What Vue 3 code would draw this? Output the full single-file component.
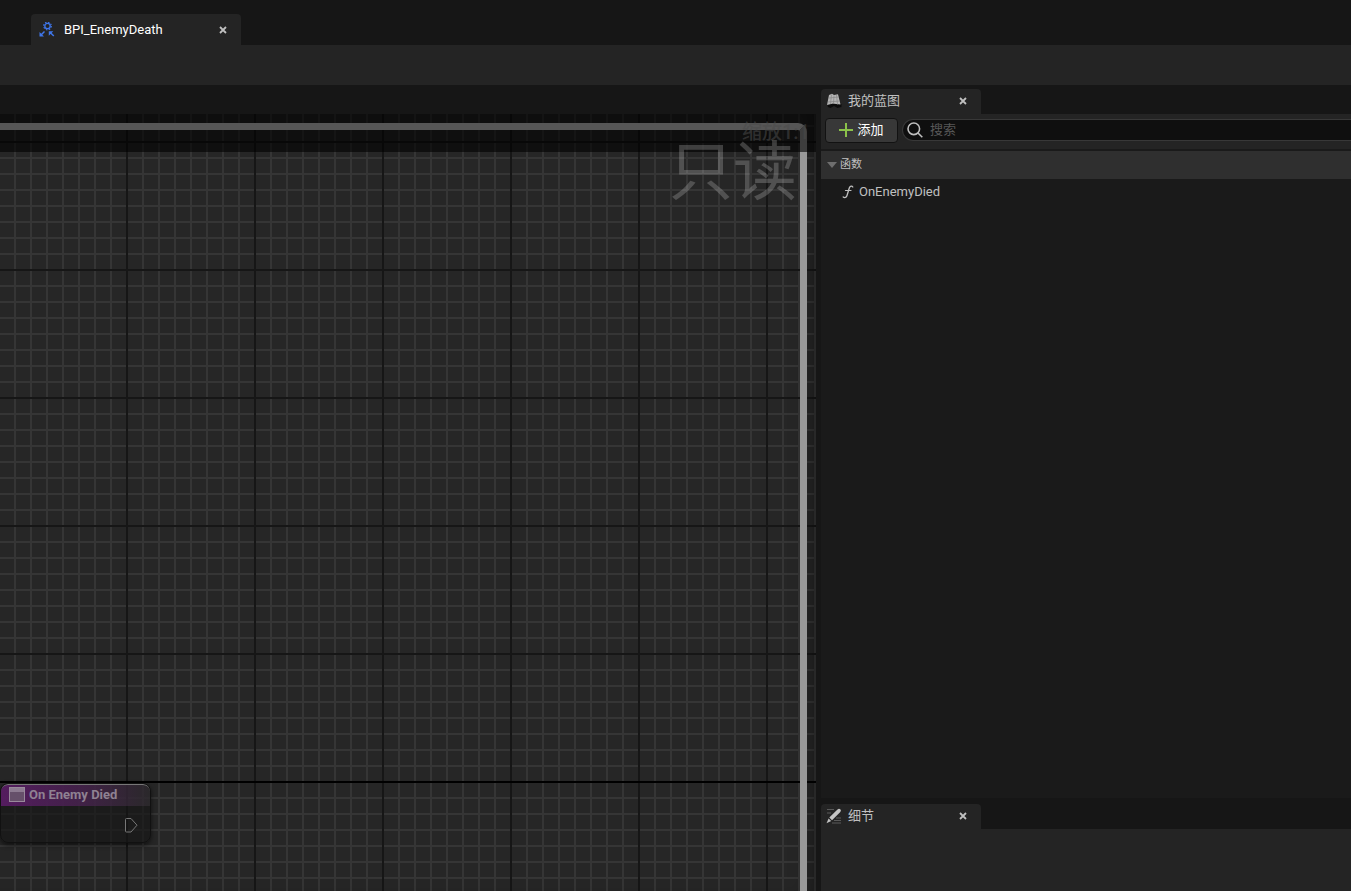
<template>
  <div class="editor">
    <header class="title-bar">
      <div class="asset-tab">
        <svg class="asset-icon" width="16" height="16" viewBox="0 0 16 16" fill="none" stroke="#3f76ea">
          <circle cx="8.5" cy="4" r="2.7" stroke-width="1.3" />
          <circle cx="8.5" cy="4" r="3.8" stroke-width="1.2" stroke-dasharray="1.5 1.484" />
          <path d="M5.500 9.500L1.500 13.500M14.800 14L11 10.200" stroke-width="1.5" />
          <path d="M.5 10v4.500H5zM9.800 9.200h4.500l-4.500 4.500z" fill="#3f76ea" stroke="none" />
        </svg>
        <span class="asset-name">BPI_EnemyDeath</span>
        <button class="close" aria-label="Close">
          <svg width="8" height="8" viewBox="0 0 8 8"><path d="M1 1l6 6M7 1l-6 6" stroke="currentColor" stroke-width="1.8" /></svg>
        </button>
      </div>
    </header>
    <div class="toolbar"></div>

    <div class="workspace">
      <main class="graph-column">
        <div class="graph">
          <div class="frame"></div>
          <div class="graph-header"></div>
          <div class="zoom-label">缩放1:1</div>
          <div class="watermark">只读</div>
          <div class="node">
            <div class="node-title">
              <svg width="16" height="15" viewBox="0 0 16 15">
                <rect x="0.5" y="0.5" width="15" height="14" fill="#66506a" stroke="#98899b" />
                <rect x="1" y="1" width="14" height="4" fill="#8d7b91" />
              </svg>
              <span>{{ node.title }}</span>
            </div>
            <div class="node-pins">
              <svg width="13" height="15" viewBox="0 0 13 15" fill="none" stroke="#777">
                <path d="M1.5 .5h4.500l6 6.700-6 6.800h-4.500q-1 0-1-1v-11.500q0-1 1-1z" />
              </svg>
            </div>
          </div>
        </div>
      </main>

      <aside class="side">
        <section class="blueprint">
          <div class="panel-tab">
            <svg width="16" height="16" viewBox="0 0 16 16">
              <path d="M1 11l1 3 2.500 1 3.500-2 3.500 2 4-1v-3z" fill="#0c0c0c" />
              <path d="M3 2l3-1.200 2 1.300 4-.8L14.500 11.500l-4.500-.5-3-.5L1 12z" fill="#b4b4b4" />
              <path d="M5.500 1.500L4.500 11M8 2.500L7.500 10.500M10.500 2l1 9.500M3 5l9.500-1M2 9l11.500-1" fill="none" stroke="#858585" stroke-width=".7" />
            </svg>
            <h2>我的蓝图</h2>
            <button class="close" aria-label="Close">
              <svg width="8" height="8" viewBox="0 0 8 8"><path d="M1 1l6 6M7 1l-6 6" stroke="currentColor" stroke-width="1.8" /></svg>
            </button>
          </div>
          <div class="panel-tools">
            <button class="btn-add">
              <svg width="14" height="14" viewBox="0 0 14 14"><path d="M7 0v14M0 7h14" stroke="#8bc24a" stroke-width="2" /></svg>
              <span>添加</span>
            </button>
            <label class="search">
              <svg width="16" height="16" viewBox="0 0 16 16" fill="none" stroke="#c0c0c0" stroke-width="1.6">
                <circle cx="6.800" cy="6.800" r="5.800" />
                <path d="M11 11l4.300 4.300" />
              </svg>
              <input v-model="query" type="text" placeholder="搜索" aria-label="搜索" />
            </label>
          </div>
          <button class="category" :aria-expanded="open" @click="open = !open">
            <svg width="10" height="6" viewBox="0 0 10 6"><path d="M0 0h10L5 6z" fill="#6e6e6e" /></svg>
            <span>函数</span>
          </button>
          <ul v-if="open" class="functions">
            <li v-for="fn in filteredFunctions" :key="fn">
              <svg width="12" height="14" viewBox="0 0 12 14" fill="none" stroke="#c0c0c0" stroke-linecap="round">
                <path d="M10.800 2C10 .6 8 .6 7.300 3L5 10.500C4.500 12.600 2.500 13 1.200 12" stroke-width="1.300" />
                <path d="M3.500 5.500h5.500" stroke-width="1.200" />
              </svg>
              <span>{{ fn }}</span>
            </li>
          </ul>
        </section>

        <section class="details">
          <div class="panel-tab">
            <svg width="16" height="16" viewBox="0 0 16 16">
              <path d="M1 1.500h7M1 5h4M10 10h5M8 12.500h7M6 15h9" stroke="#5a5a5a" stroke-width="1.200" />
              <path d="M11.500 1.500q1.500-1.500 2.800-.2 1.300 1.200 0 2.700L6 12.300 3.300 9.600z" fill="#c4c4c4" />
              <path d="M2.600 10.500l2.600 2.600L.5 15.200z" fill="#c4c4c4" />
            </svg>
            <h2>细节</h2>
            <button class="close" aria-label="Close">
              <svg width="8" height="8" viewBox="0 0 8 8"><path d="M1 1l6 6M7 1l-6 6" stroke="currentColor" stroke-width="1.8" /></svg>
            </button>
          </div>
          <div class="details-body"></div>
        </section>
      </aside>
    </div>
  </div>
</template>

<script setup>
import { ref, computed } from 'vue'

const query = ref('')
const open = ref(true)
const node = ref({ title: 'On Enemy Died' })
const functions = ref(['OnEnemyDied'])

const filteredFunctions = computed(() => {
  return functions.value.filter(fn => fn.toLowerCase().includes(query.value.toLowerCase()))
})
</script>

<style>
body {
  margin: 0;
  background: #161616;
}
</style>

<style scoped>
* {
  box-sizing: border-box;
}

svg {
  display: block;
  flex-shrink: 0;
}

button,
input {
  font: inherit;
  border: none;
  padding: 0;
}

.editor {
  height: 100vh;
  display: flex;
  flex-direction: column;
  overflow: hidden;
  background: #161616;
  color: #c0c0c0;
  font: 13px/16px Roboto, "Noto Sans CJK SC", sans-serif;
}

.title-bar {
  padding: 14px 31px 0;
}

.asset-tab {
  display: flex;
  align-items: center;
  width: 210px;
  height: 31px;
  padding: 0 14px 0 8px;
  border-radius: 4px 4px 0 0;
  background: #242424;
  color: #fff;
}

.asset-name {
  flex: 1;
  margin-left: 9px;
}

.close {
  display: flex;
  background: none;
  color: #c0c0c0;
  cursor: pointer;
}

.toolbar {
  height: 40px;
  flex-shrink: 0;
  background: #242424;
}

.workspace {
  flex: 1;
  min-height: 0;
  display: grid;
  grid-template-columns: minmax(0, 816fr) minmax(0, 530fr);
  gap: 5px;
}

.graph-column {
  display: flex;
  padding-top: 29px;
}

.graph {
  position: relative;
  flex: 1;
  overflow: hidden;
  background-color: #262626;
  background-image:
    linear-gradient(#000, #000),
    linear-gradient(to right, transparent 126px, #161616 126px),
    linear-gradient(transparent 126px, #161616 126px),
    linear-gradient(to right, transparent 14px, #353535 14px),
    linear-gradient(transparent 14px, #353535 14px);
  background-size: 100% 2px, 128px 128px, 128px 128px, 16px 16px, 16px 16px;
  background-position: 0 667px, 0 0, 0 29px, 0 0, 0 13px;
  background-repeat: no-repeat, repeat, repeat, repeat, repeat;
  box-shadow: inset -16px 0 24px -16px rgba(0, 0, 0, 0.5);
}

.frame,
.graph-header {
  position: absolute;
  pointer-events: none;
}

.frame {
  inset: 9px 9px -10px -10px;
  border: 7px solid #999;
  border-top-color: #d8d8d8;
  border-radius: 9px;
}

.graph-header {
  inset: 0 0 auto;
  height: 38px;
  background: rgba(0, 0, 0, 0.6);
}

.zoom-label {
  position: absolute;
  top: 6px;
  right: 6px;
  color: rgba(75, 75, 75, 0.55);
  font-size: 20px;
  font-weight: 500;
  line-height: 24px;
}

.watermark {
  position: absolute;
  top: 23px;
  right: 19px;
  color: rgba(255, 255, 255, 0.2);
  font-size: 64px;
  line-height: 72px;
}

.node {
  position: absolute;
  top: 669px;
  left: 0;
  width: 151px;
  height: 60px;
  border: 1px solid #111;
  border-radius: 8px;
  overflow: hidden;
  background: rgba(22, 22, 22, 0.65);
  box-shadow: 0 2px 5px rgba(0, 0, 0, 0.6);
}

.node-title {
  display: flex;
  align-items: center;
  gap: 4px;
  height: 22px;
  padding: 0 8px 2px;
  border-top: 1px solid #777;
  border-radius: 7px 7px 0 0;
  background: linear-gradient(to right, rgba(90, 28, 102, 0.9), rgba(76, 34, 84, 0.8) 50%, rgba(65, 60, 66, 0.4));
  color: #8f8192;
  font-weight: bold;
}

.node-pins {
  display: flex;
  justify-content: flex-end;
  padding: 12px 12px 0 0;
}

.side {
  display: flex;
  flex-direction: column;
  gap: 6px;
  padding-top: 4px;
  min-height: 0;
}

.blueprint {
  flex: 1;
  display: flex;
  flex-direction: column;
  min-height: 0;
  background: linear-gradient(#161616 25px, #1a1a1a 25px);
}

.panel-tab {
  display: flex;
  align-items: center;
  width: 160px;
  height: 25px;
  padding: 0 14px 2px 5px;
  border-radius: 4px 4px 0 0;
  background: #242424;
}

.panel-tab h2 {
  flex: 1;
  margin: 0 0 0 6px;
  font-size: 13px;
  font-weight: normal;
}

.panel-tools {
  display: flex;
  align-items: center;
  gap: 4px;
  height: 37px;
  padding: 0 0 3px 4px;
  background: #242424;
  border-bottom: 2px solid #1a1a1a;
}

.btn-add {
  display: flex;
  align-items: center;
  justify-content: center;
  gap: 4px;
  width: 73px;
  height: 25px;
  border: 1px solid #121212;
  border-radius: 4px;
  background: #383838;
  color: #fff;
  cursor: pointer;
}

.search {
  flex: 1;
  display: flex;
  align-items: center;
  gap: 7px;
  height: 22px;
  padding-left: 4px;
  border: 1px solid #383838;
  border-right: none;
  border-radius: 11px 0 0 11px;
  background: #0f0f0f;
}

.search input {
  flex: 1;
  min-width: 0;
  background: none;
  color: #c0c0c0;
  outline: none;
}

.search input::placeholder {
  color: #575757;
}

.category {
  display: flex;
  align-items: center;
  gap: 3px;
  height: 28px;
  padding: 0 6px;
  background: #2f2f2f;
  color: #c0c0c0;
  font-size: 11px;
}

.functions {
  margin: 0;
  padding: 0;
  list-style: none;
}

.functions li {
  display: flex;
  align-items: center;
  gap: 5px;
  height: 25px;
  padding-left: 21px;
}

.details-body {
  height: 62px;
  background: #242424;
}
</style>
